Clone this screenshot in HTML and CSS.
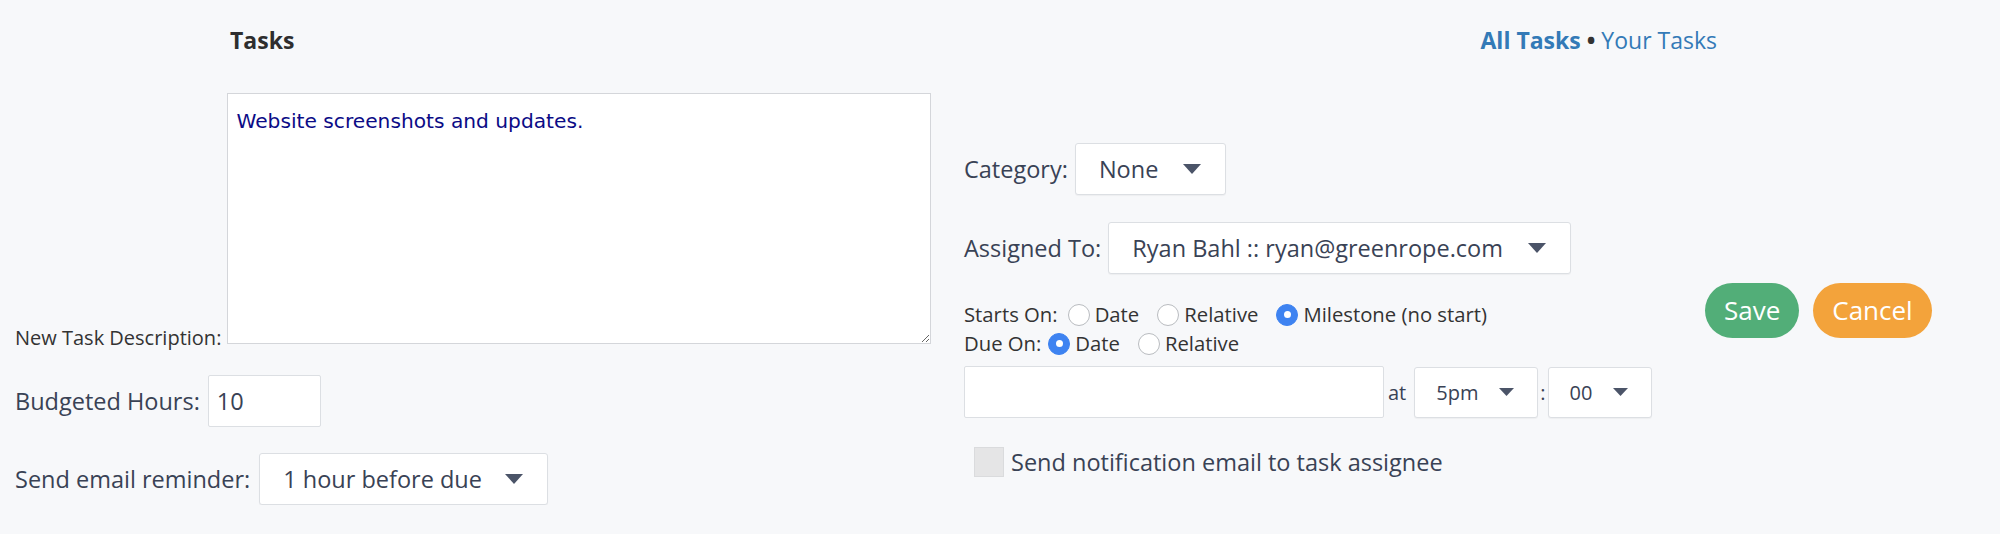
FILE: index.html
```html
<!DOCTYPE html>
<html>
<head>
<meta charset="utf-8">
<title>Tasks</title>
<link rel="stylesheet" href="styles.css">
</head>
<body>
<div class="page">
  <header class="top">
    <h1 class="title">Tasks</h1>
    <nav class="views"><a href="#" class="active">All Tasks</a> <span class="dot">&bull;</span> <a href="#">Your Tasks</a></nav>
  </header>
  <div class="main">
    <div class="col-left">
      <div class="row-desc">
        <label class="lbl-sm desc-lbl">New Task Description:</label>
        <textarea class="desc">Website screenshots and updates.</textarea>
      </div>
      <div class="field-row hours-row">
        <label class="lbl">Budgeted Hours:</label>
        <input class="text-input hours" type="text" value="10">
      </div>
      <div class="field-row reminder-row">
        <label class="lbl">Send email reminder:</label>
        <div class="select sel-reminder"><span>1 hour before due</span><svg viewBox="0 0 18 10"><path d="M0 0H18L9 10Z"/></svg></div>
      </div>
    </div>
    <div class="col-right">
      <div class="field-row cat-row">
        <label class="lbl">Category:</label>
        <div class="select sel-cat"><span>None</span><svg viewBox="0 0 18 10"><path d="M0 0H18L9 10Z"/></svg></div>
      </div>
      <div class="field-row assign-row">
        <label class="lbl">Assigned To:</label>
        <div class="select sel-assign"><span>Ryan Bahl :: ryan@greenrope.com</span><svg viewBox="0 0 18 10"><path d="M0 0H18L9 10Z"/></svg></div>
      </div>
      <div class="opt-row starts-row">
        <span class="opt-lbl">Starts On:</span>
        <span class="radio first"></span><span>Date</span>
        <span class="radio"></span><span>Relative</span>
        <span class="radio checked"></span><span>Milestone (no start)</span>
      </div>
      <div class="opt-row due-row">
        <span class="opt-lbl">Due On:</span>
        <span class="radio first due-first checked"></span><span>Date</span>
        <span class="radio"></span><span>Relative</span>
      </div>
      <div class="date-row">
        <input class="text-input date" type="text" value="">
        <span class="at">at</span>
        <div class="select sel-time sel-hour"><span>5pm</span><svg viewBox="0 0 15 8"><path d="M0 0H15L7.5 8Z"/></svg></div>
        <span class="colon">:</span>
        <div class="select sel-time sel-min"><span>00</span><svg viewBox="0 0 15 8"><path d="M0 0H15L7.5 8Z"/></svg></div>
      </div>
      <div class="check-row">
        <span class="checkbox"></span>
        <span class="check-lbl">Send notification email to task assignee</span>
      </div>
    </div>
    <div class="actions">
      <button class="btn save">Save</button>
      <button class="btn cancel">Cancel</button>
    </div>
  </div>
</div>
</body>
</html>
```

FILE: styles.css
```css
* { box-sizing: border-box; }

body {
  margin: 0;
  background: #f7f8fa;
  font-family: "Open Sans", sans-serif;
  color: #394255;
}

.top {
  display: flex;
  justify-content: space-between;
  align-items: baseline;
  padding: 25px 283px 0 230px;
  height: 56px;
  font-size: 23px;
  line-height: 31px;
}

.title {
  margin: 0;
  font-size: 23px;
  line-height: 31px;
  font-weight: 700;
  color: #2e2e2e;
}

.views a {
  color: #337ab7;
  text-decoration: none;
}

.views .active { font-weight: 700; }
.views .dot { color: #333; font-weight: 700; }

.main {
  display: flex;
  margin-top: 37px;
}

.col-left {
  width: 964px;
  padding-left: 15px;
  display: flex;
  flex-direction: column;
}

.row-desc {
  display: flex;
  align-items: flex-end;
}

.lbl-sm {
  font-size: 20px;
  line-height: 20px;
  color: #333;
}

.desc-lbl {
  margin-right: 6px;
  margin-bottom: -4px;
}

.desc {
  display: block;
  width: 704px;
  height: 251px;
  margin: 0;
  padding: 15px 8px 12px;
  border: 1px solid #d4d6da;
  border-radius: 0;
  background: #fff;
  font-family: "DejaVu Sans", sans-serif;
  font-size: 20.2px;
  color: #0b0b86;
  resize: both;
}

.field-row {
  display: flex;
  align-items: center;
  gap: 8px;
}

.lbl {
  font-size: 23.5px;
  color: #394255;
}

.text-input {
  height: 52px;
  margin: 0;
  border: 1px solid #dcdfe3;
  border-radius: 2px;
  background: #fff;
  font-family: "Open Sans", sans-serif;
  font-size: 23.5px;
  color: #394255;
  padding: 0 8px;
}

.hours-row { margin-top: 31px; }
.hours { width: 113px; }

.reminder-row { margin-top: 26px; gap: 9px; }

.select {
  display: flex;
  align-items: center;
  justify-content: space-between;
  height: 52px;
  padding: 0 24px 0 23px;
  background: #fff;
  border: 1px solid #dcdfe3;
  border-radius: 3px;
  box-shadow: 0 1px 1px rgba(0, 0, 0, 0.04);
  font-size: 23.5px;
  color: #394255;
  white-space: nowrap;
}

.select svg {
  width: 18px;
  height: 10px;
  fill: #4b5468;
  flex: none;
}

.sel-reminder { width: 289px; }
.sel-cat { width: 151px; }
.sel-assign { width: 463px; }

.col-right {
  width: 741px;
  display: flex;
  flex-direction: column;
}

.cat-row { margin-top: 50px; gap: 7px; }
.assign-row { margin-top: 27px; gap: 7px; }

.opt-row {
  display: flex;
  align-items: center;
  height: 29px;
  font-size: 20.3px;
  line-height: 29px;
  color: #333;
}

.starts-row { margin-top: 26px; }

.radio {
  width: 22px;
  height: 22px;
  border-radius: 50%;
  border: 1px solid #b9bcc0;
  background: #fff;
  margin: 0 5px 0 18px;
  position: relative;
  flex: none;
}

.radio.first { margin-left: 10px; }
.radio.due-first { margin-left: 7px; }

.radio.checked {
  background: #3e83f1;
  border-color: #3e83f1;
}

.radio.checked::after {
  content: "";
  position: absolute;
  left: 50%;
  top: 50%;
  width: 7px;
  height: 7px;
  margin: -3.5px 0 0 -3.5px;
  border-radius: 50%;
  background: #fff;
}

.date-row {
  display: flex;
  align-items: center;
  margin-top: 8px;
}

.date { width: 420px; }

.at {
  font-size: 20px;
  margin: 0 8px 0 4px;
}

.colon {
  font-size: 20px;
  margin: 0 2px;
}

.sel-time {
  height: 51px;
  font-size: 20px;
  padding: 0 23px 0 21px;
}

.sel-time svg {
  width: 15px;
  height: 8px;
}

.sel-hour { width: 124px; }
.sel-min { width: 104px; }

.check-row {
  display: flex;
  align-items: center;
  margin-top: 28px;
}

.checkbox {
  width: 30px;
  height: 30px;
  background: #e5e5e6;
  border: 1px solid #dadbdd;
  margin: 0 7px 0 10px;
  flex: none;
}

.check-lbl {
  font-size: 23.5px;
  color: #394255;
}

.actions {
  display: flex;
  align-items: flex-start;
  gap: 14px;
  margin-top: 190px;
}

.btn {
  height: 55px;
  padding: 0 19px;
  border: none;
  border-radius: 28px;
  font-family: "Open Sans", sans-serif;
  font-size: 26px;
  line-height: 55px;
  color: #fff;
}

.save { background: #52ae78; }
.cancel { background: #f3a33b; }
```
